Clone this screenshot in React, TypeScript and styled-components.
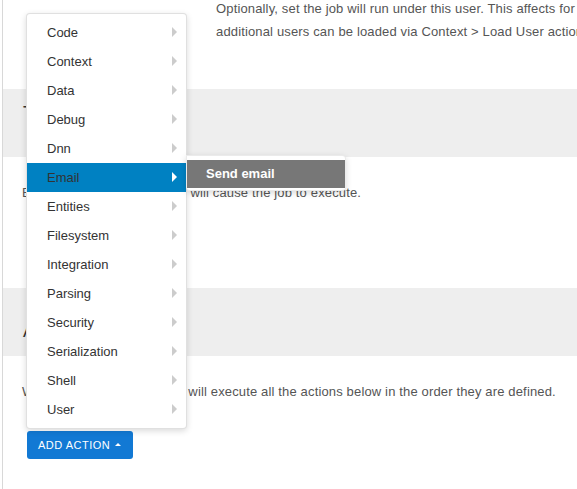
import React from 'react';
import styled, {createGlobalStyle} from 'styled-components';

const GlobalStyle = createGlobalStyle`
  html, body { margin: 0; padding: 0; background: #fff; }
  body { font-family: "Liberation Sans", Arial, sans-serif; overflow: hidden; }
  * { box-sizing: border-box; }
`;

const Page = styled.div`
  margin-left: 2px;border-left: 1px solid #d8d8d8;height: 489px;
`;
const Section = styled.div<{$h: number; $pt: number}>`
  display: flow-root;height: ${p => p.$h}px;padding: ${p => p.$pt}px 0 0 19px;
`;
const Help = styled.p`
  margin: -3px 0 0 194px;font-size: 13px;line-height: 23px;color: #555;letter-spacing: 0.15px;
  white-space: nowrap;
`;
const Band = styled.div<{$pt: number}>`
  height: 68px;background: #eee;padding: ${p => p.$pt}px 0 0 20px;
`;
const Title = styled.h3`
  margin: 0;font-size: 18px;line-height: 20px;font-weight: normal;color: #333;
`;
const Text = styled.p`
  margin: 0;font-size: 13px;line-height: 22px;color: #555;letter-spacing: 0.15px;white-space: nowrap;
`;
const DropUp = styled.div`
  position: relative;display: inline-block;margin: 28px 0 0 5px;
`;
const AddButton = styled.button`
  display: flex;align-items: center;height: 28px;padding: 0 12px 0 11px;
  border: none;border-radius: 3px;background: #1279d4;color: #fff;
  font-family: "Liberation Sans", Arial, sans-serif;font-size: 11px;letter-spacing: 0.5px;
  text-transform: uppercase;cursor: pointer;
`;
const Caret = styled.span`
  display: inline-block;width: 0;height: 0;margin-left: 5px;margin-top: -1px;
  border-left: 3px solid transparent;border-right: 3px solid transparent;border-bottom: 3px solid #fff;
`;
const Menu = styled.ul`
  position: absolute;bottom: calc(100% + 2px);left: -1px;width: 161px;margin: 0;padding: 4px 0;
  list-style: none;background: #fff;border: 1px solid rgba(0, 0, 0, 0.12);border-radius: 4px;
  box-shadow: 0 2px 6px rgba(0, 0, 0, 0.15);z-index: 10;
`;
const Item = styled.li<{$active?: boolean}>`
  position: relative;display: flex;justify-content: space-between;align-items: center;
  height: 29px;padding: 0 9px 0 20px;font-size: 13px;color: #333;
  background: ${p => (p.$active ? '#0081c2' : 'transparent')};
`;
const Arrow = styled.span<{$light?: boolean}>`
  width: 0;height: 0;border-top: 5px solid transparent;border-bottom: 5px solid transparent;
  border-left: 5px solid ${p => (p.$light ? '#fff' : '#ccc')};margin-top: -1px;
`;
const SubMenu = styled.ul`
  position: absolute;top: -8px;left: 100%;width: 160px;margin: 0;padding: 4px 0 2px;list-style: none;
  background: #fff;border: 1px solid rgba(0, 0, 0, 0.08);border-radius: 0 4px 4px 4px;
  box-shadow: 0 2px 6px rgba(0, 0, 0, 0.15);
`;
const SubItem = styled.li`
  height: 28px;line-height: 28px;padding-left: 19px;background: #777;color: #fff;
  font-size: 13px;font-weight: bold;
`;

const groups = ['Code', 'Context', 'Data', 'Debug', 'Dnn', 'Email', 'Entities', 'Filesystem',
  'Integration', 'Parsing', 'Security', 'Serialization', 'Shell', 'User'];

const App: React.FC = () => {
  const open = 'Email';
  return (
    <>
      <GlobalStyle/>
      <Page>
        <Section $h={89} $pt={0}>
          <Help>
            Optionally, set the job will run under this user. This affects for<br/>
            additional users can be loaded via Context &gt; Load User actions.
          </Help>
        </Section>
        <Band $pt={14}><Title>Triggers</Title></Band>
        <Section $h={131} $pt={25}>
          <Text>Every trigger defined below, will cause the job to execute.</Text>
        </Section>
        <Band $pt={33}><Title>Actions</Title></Band>
        <Section $h={133} $pt={25}>
          <Text>When the job is triggered, it will execute all the actions below in the order they are defined.</Text>
          <DropUp>
            <Menu>
              {groups.map(g => (
                <Item key={g} $active={g === open}>
                  {g}
                  <Arrow $light={g === open}/>
                  {g === open && (
                    <SubMenu>
                      <SubItem>Send email</SubItem>
                    </SubMenu>
                  )}
                </Item>
              ))}
            </Menu>
            <AddButton>Add Action<Caret/></AddButton>
          </DropUp>
        </Section>
      </Page>
    </>
  );
};

export default App;
